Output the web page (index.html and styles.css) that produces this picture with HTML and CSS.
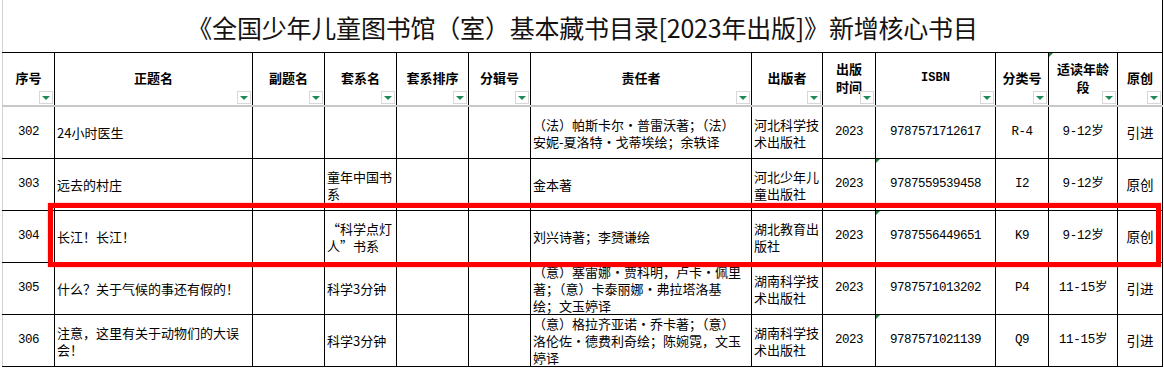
FILE: index.html
```html
<!DOCTYPE html>
<html lang="zh-CN">
<head>
<meta charset="utf-8">
<title>新增核心书目</title>
<link rel="stylesheet" href="styles.css">
</head>
<body>
<div class="sheet">
  <div class="title">《全国少年儿童图书馆（室）基本藏书目录[2023年出版]》新增核心书目</div>
  <table class="grid">
    <colgroup>
      <col class="c-no"><col class="c-title"><col class="c-sub"><col class="c-series"><col class="c-order"><col class="c-vol"><col class="c-author"><col class="c-pub"><col class="c-year"><col class="c-isbn"><col class="c-class"><col class="c-age"><col class="c-orig">
    </colgroup>
    <thead>
      <tr>
        <th>序号<span class="filter"></span></th>
        <th>正题名<span class="filter"></span></th>
        <th>副题名<span class="filter"></span></th>
        <th>套系名<span class="filter"></span></th>
        <th>套系排序<span class="filter"></span></th>
        <th>分辑号<span class="filter"></span></th>
        <th>责任者<span class="filter"></span></th>
        <th>出版者<span class="filter"></span></th>
        <th class="two">出版<br>时间<span class="filter"></span></th>
        <th class="latin">ISBN<span class="filter"></span></th>
        <th>分类号<span class="filter"></span></th>
        <th class="two note">适读年龄<br>段<span class="filter"></span></th>
        <th>原创<span class="filter"></span></th>
      </tr>
    </thead>
    <tbody>
      <tr>
        <td class="num">302</td>
        <td class="txt">24小时医生</td>
        <td class="txt"></td>
        <td class="txt"></td>
        <td></td>
        <td></td>
        <td class="txt">（法）帕斯卡尔·普雷沃著；（法）<br>安妮-夏洛特·戈蒂埃绘；余轶译</td>
        <td class="txt">河北科学技术出版社</td>
        <td class="num">2023</td>
        <td class="num">9787571712617</td>
        <td class="num">R-4</td>
        <td class="age">9-12岁</td>
        <td class="ctr">引进</td>
      </tr>
      <tr>
        <td class="num">303</td>
        <td class="txt">远去的村庄</td>
        <td class="txt"></td>
        <td class="txt">童年中国书系</td>
        <td></td>
        <td></td>
        <td class="txt">金本著</td>
        <td class="txt">河北少年儿童出版社</td>
        <td class="num">2023</td>
        <td class="num note">9787559539458</td>
        <td class="num">I2</td>
        <td class="age">9-12岁</td>
        <td class="ctr">原创</td>
      </tr>
      <tr>
        <td class="num">304</td>
        <td class="txt">长江！长江！</td>
        <td class="txt"></td>
        <td class="txt">“科学点灯<br>人”书系</td>
        <td></td>
        <td></td>
        <td class="txt">刘兴诗著；李赟谦绘</td>
        <td class="txt">湖北教育出版社</td>
        <td class="num">2023</td>
        <td class="num note">9787556449651</td>
        <td class="num">K9</td>
        <td class="age">9-12岁</td>
        <td class="ctr">原创</td>
      </tr>
      <tr>
        <td class="num">305</td>
        <td class="txt">什么？关于气候的事还有假的！</td>
        <td class="txt"></td>
        <td class="txt">科学3分钟</td>
        <td></td>
        <td></td>
        <td class="txt">（意）塞雷娜·贾科明，卢卡·佩里<br>著；（意）卡泰丽娜·弗拉塔洛基<br>绘；文玉婷译</td>
        <td class="txt">湖南科学技术出版社</td>
        <td class="num">2023</td>
        <td class="num note">9787571013202</td>
        <td class="num">P4</td>
        <td class="age">11-15岁</td>
        <td class="ctr">引进</td>
      </tr>
      <tr>
        <td class="num">306</td>
        <td class="txt">注意，这里有关于动物们的大误<br>会！</td>
        <td class="txt"></td>
        <td class="txt">科学3分钟</td>
        <td></td>
        <td></td>
        <td class="txt">（意）格拉齐亚诺·乔卡著；（意）<br>洛伦佐·德费利奇绘；陈婉霓，文玉<br>婷译</td>
        <td class="txt">湖南科学技术出版社</td>
        <td class="num">2023</td>
        <td class="num note">9787571021139</td>
        <td class="num">Q9</td>
        <td class="age">11-15岁</td>
        <td class="ctr">引进</td>
      </tr>
    </tbody>
  </table>
  <div class="highlight"></div>
</div>
</body>
</html>
```

FILE: styles.css
```css
html, body {
  margin: 0;
  padding: 0;
  background: #ffffff;
}

body {
  font-family: "Noto Sans CJK SC", sans-serif;
  color: #000;
  overflow: hidden;
}

.sheet {
  position: relative;
  width: 1164px;
  height: 369px;
  padding-left: 2px;
  box-sizing: border-box;
}

.title {
  width: 1161px;
  height: 52px;
  box-sizing: border-box;
  border-left: 1px solid #d2d2d2;
  border-right: 1px solid #000;
  display: flex;
  align-items: center;
  justify-content: center;
  font-size: 25px;
  font-weight: 400;
  color: #151210;
  padding-top: 1px;
  letter-spacing: -0.2px;
}

.grid {
  border-collapse: collapse;
  table-layout: fixed;
  width: 1161px;
  font-size: 13px;
  line-height: 17px;
}

.c-no { width: 52px; }
.c-title { width: 198px; }
.c-sub { width: 72px; }
.c-series { width: 72px; }
.c-order { width: 72px; }
.c-vol { width: 62px; }
.c-author { width: 221px; }
.c-pub { width: 71px; }
.c-year { width: 53px; }
.c-isbn { width: 120px; }
.c-class { width: 53px; }
.c-age { width: 69px; }
.c-orig { width: 45px; }

.grid th,
.grid td {
  border: 1px solid #000;
  padding: 0 2px;
  position: relative;
  overflow: hidden;
}

.grid th:first-child,
.grid td:first-child {
  border-left: 1px solid #d2d2d2;
}

.grid th {
  height: 50px;
  font-weight: 700;
  text-align: center;
  vertical-align: middle;
  border-bottom: 2px solid #c8c8c8;
  padding-bottom: 2px;
  line-height: 18px;
}

.grid th.latin {
  font-family: "Liberation Mono", monospace;
  font-size: 12px;
}

.grid td {
  height: 51px;
  vertical-align: middle;
}

.txt {
  text-align: left;
}

.num {
  font-family: "Liberation Mono", monospace;
  font-size: 12.5px;
  letter-spacing: -0.5px;
  text-align: center;
}

.age {
  font-family: "Liberation Mono", "Noto Sans CJK SC", monospace;
  font-size: 12.5px;
  letter-spacing: -0.3px;
  text-align: center;
}

.ctr {
  text-align: center;
  font-size: 13.5px;
}

.filter {
  position: absolute;
  right: 1px;
  bottom: 1px;
  width: 14px;
  height: 13px;
  box-sizing: border-box;
  background: #fff;
  border: 1px solid #d8d8d8;
  display: flex;
  align-items: center;
  justify-content: center;
}

.filter::after {
  content: "";
  width: 0;
  height: 0;
  border-left: 4px solid transparent;
  border-right: 4px solid transparent;
  border-top: 4px solid #1f8a55;
}

.note::before {
  content: "";
  position: absolute;
  top: 0;
  left: 0;
  width: 0;
  height: 0;
  border-top: 4px solid #1d7f3a;
  border-right: 4px solid transparent;
}

.highlight {
  position: absolute;
  left: 48px;
  top: 203px;
  width: 1113px;
  height: 64px;
  box-sizing: border-box;
  border: 5px solid #ff0000;
  box-shadow: 0 0 2px rgba(255, 60, 60, 0.5);
  pointer-events: none;
}
```
